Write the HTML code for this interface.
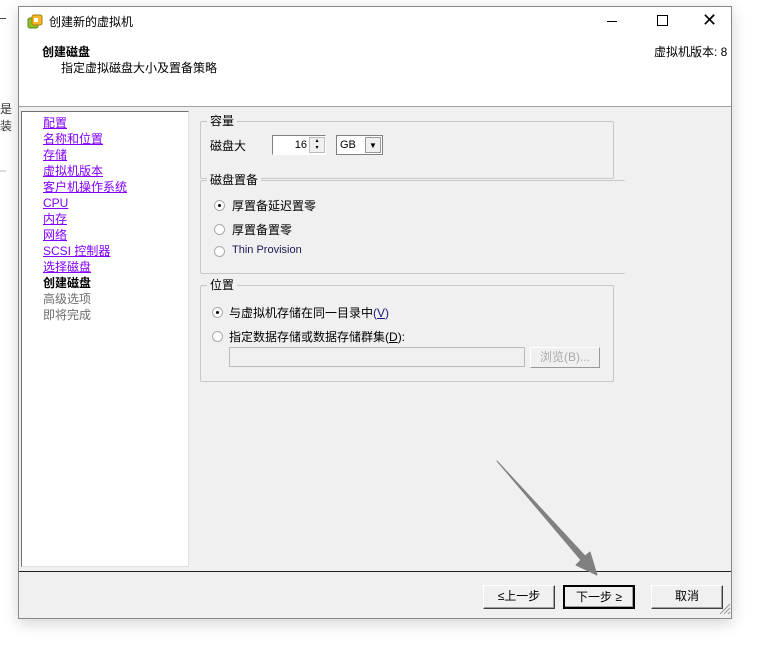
<!DOCTYPE html>
<html><head><meta charset="utf-8"><style>
*{margin:0;padding:0;box-sizing:border-box}
body{width:777px;height:658px;background:#fff;position:relative;overflow:hidden;font-family:"Liberation Sans","Noto Sans CJK SC",sans-serif;font-size:12px;color:#000}
.abs{position:absolute}
.win{left:18px;top:6px;width:714px;height:613px;border:1px solid #888;background:#f0f0f0;box-shadow:0 4px 14px rgba(0,0,0,.18)}
.nav a{position:absolute;left:21px;color:#8000ff;text-decoration:underline;font-size:12px;line-height:16px}
.grp{position:absolute;border:1px solid #c8c8c8;border-radius:2px}
.lg{position:absolute;top:-8px;left:6px;background:#f0f0f0;padding:0 3px;font-size:12px;line-height:14px}
.rad{position:absolute;width:11px;height:11px;border-radius:50%;border:1px solid #aaa;background:#fff}
.rad.on::after{content:"";position:absolute;left:3px;top:3px;width:3px;height:3px;background:#000;border-radius:50%}
.btn{position:absolute;top:578px;width:72px;height:24px;background:#f0f0f0;border:1px solid;border-color:#fff #404040 #404040 #fff;box-shadow:inset -1px -1px 0 #a0a0a0;text-align:center;line-height:21px;font-size:12px}
</style></head><body>
<div class="abs" style="left:0;top:100px;font-size:12px;color:#333">是</div>
<div class="abs" style="left:0;top:117px;font-size:12px;color:#333">装</div>
<div class="abs" style="left:0;top:18px;width:6px;height:1px;background:#444"></div>
<div class="abs" style="left:0;top:170px;width:6px;height:2px;background:#ddd"></div>
<div class="abs win">
 <div class="abs" style="left:0;top:0;width:712px;height:100px;background:#fff;border-bottom:1px solid #a0a0a0"></div>
 <svg class="abs" style="left:8px;top:7px" width="16" height="16" viewBox="0 0 16 16"><rect x="1" y="4" width="10" height="10" rx="2" fill="#8fbf2a" stroke="#5a8a10"/><rect x="5" y="1" width="10" height="10" rx="2" fill="#f5b82a" stroke="#b07a10"/><rect x="7" y="4" width="4" height="4" fill="#fff"/></svg>
 <div class="abs" style="left:30px;top:7px;font-size:12px;line-height:16px">创建新的虚拟机</div>
 <div class="abs" style="left:588px;top:14px;width:10px;height:1px;background:#000"></div>
 <div class="abs" style="left:638px;top:8px;width:11px;height:11px;border:1px solid #000"></div>
 <div class="abs" style="left:683px;top:3px;font-size:18px;line-height:20px;font-weight:300">✕</div>
 <div class="abs" style="left:23px;top:37px;font-weight:bold;line-height:16px">创建磁盘</div>
 <div class="abs" style="left:42px;top:53px;line-height:16px">指定虚拟磁盘大小及置备策略</div>
 <div class="abs" style="left:635px;top:37px;line-height:16px">虚拟机版本: 8</div>
 <div class="abs nav" style="left:2px;top:104px;width:168px;height:456px;background:#fff;border:1px solid;border-color:#707070 #e0e0e0 #e0e0e0 #707070">
  <a style="top:3px">配置</a><a style="top:19px">名称和位置</a><a style="top:35px">存储</a><a style="top:51px">虚拟机版本</a><a style="top:67px">客户机操作系统</a><a style="top:83px">CPU</a><a style="top:99px">内存</a><a style="top:115px">网络</a><a style="top:131px">SCSI 控制器</a><a style="top:147px">选择磁盘</a>
  <div class="abs" style="left:21px;top:163px;font-weight:bold;line-height:16px">创建磁盘</div>
  <div class="abs" style="left:21px;top:179px;color:#6d6d6d;line-height:16px">高级选项</div>
  <div class="abs" style="left:21px;top:195px;color:#6d6d6d;line-height:16px">即将完成</div>
 </div>
 <div class="grp" style="left:181px;top:114px;width:414px;height:58px"><div class="lg">容量</div>
  <div class="abs" style="left:9px;top:15px">磁盘大</div>
  <div class="abs" style="left:71px;top:13px;width:54px;height:20px;background:#fff;border:1px solid;border-color:#808080 #fff #fff #808080;font-size:11px;text-align:right;padding-right:18px;line-height:18px">16</div>
  <div class="abs" style="left:108px;top:15px;width:16px;height:16px;background:#f0f0f0;border:1px solid #bbb;font-size:6px;text-align:center;line-height:7px">▴<br>▾</div>
  <div class="abs" style="left:135px;top:13px;width:47px;height:20px;background:#fff;border:1px solid #808080;font-size:11px;padding-left:3px;line-height:18px">GB</div>
  <div class="abs" style="left:164px;top:15px;width:16px;height:16px;background:#f0f0f0;border:1px solid #999;font-size:8px;text-align:center;line-height:15px">▼</div>
 </div>
 <div class="grp" style="left:181px;top:173px;width:425px;height:94px;border-right:none"><div class="lg">磁盘置备</div>
  <div class="rad on" style="left:13px;top:19px"></div><div class="abs" style="left:31px;top:16px">厚置备延迟置零</div>
  <div class="rad" style="left:13px;top:43px"></div><div class="abs" style="left:31px;top:40px">厚置备置零</div>
  <div class="rad" style="left:13px;top:65px"></div><div class="abs" style="left:31px;top:63px;font-size:11px;color:#1a1a50">Thin Provision</div>
 </div>
 <div class="grp" style="left:181px;top:278px;width:414px;height:97px"><div class="lg">位置</div>
  <div class="rad on" style="left:11px;top:21px"></div><div class="abs" style="left:28px;top:18px">与虚拟机存储在同一目录中<span style="color:#1a1a80">(<u>V</u>)</span></div>
  <div class="rad" style="left:11px;top:45px"></div><div class="abs" style="left:28px;top:42px">指定数据存储或数据存储群集<span>(<u>D</u>):</span></div>
  <div class="abs" style="left:28px;top:61px;width:296px;height:20px;border:1px solid #bbb;background:#f0f0f0"></div>
  <div class="abs" style="left:329px;top:61px;width:70px;height:21px;border:1px solid;border-color:#fff #999 #999 #fff;color:#aaa;text-align:center;line-height:19px">浏览(B)...</div>
 </div>
 <div class="abs" style="left:0;top:564px;width:712px;height:1px;background:#222"></div>
 <div class="btn" style="left:464px">≤上一步</div>
 <div class="btn" style="left:544px;border:2px solid #000">下一步 ≥</div>
 <div class="btn" style="left:632px">取消</div>
 <svg class="abs" style="left:700px;top:596px" width="12" height="12"><path d="M11 1L1 11M11 5L5 11M11 9L9 11" stroke="#999"/></svg>
</div>
<svg class="abs" style="left:0;top:0" width="777" height="658"><path d="M497 461 L585 556 L590 552 L597 575 L576 565 L581 560 Z" fill="#808080" stroke="#808080" stroke-width="1" stroke-linejoin="round"/></svg>
</body></html>
